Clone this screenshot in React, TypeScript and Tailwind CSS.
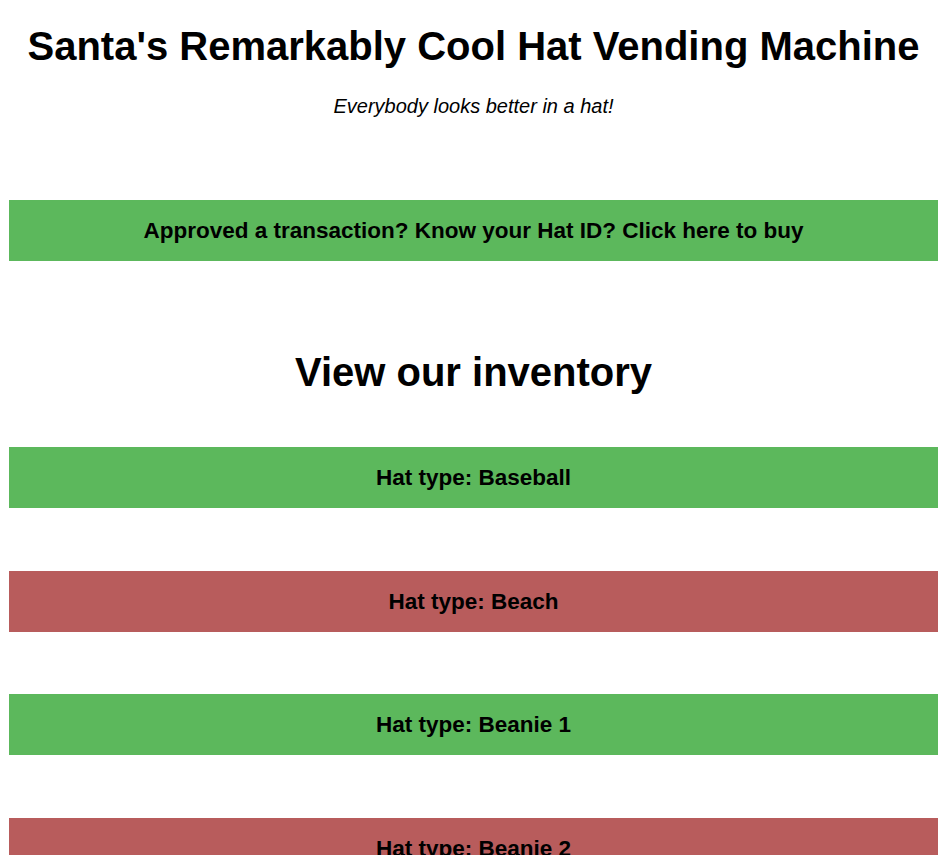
import React from "react";

const hats = [
  { name: "Baseball", ok: true, mt: "mt-[52px]" },
  { name: "Beach", ok: false, mt: "mt-[63px]" },
  { name: "Beanie 1", ok: true, mt: "mt-[62px]" },
  { name: "Beanie 2", ok: false, mt: "mt-[63px]" },
];

export default function App() {
  return (
    <div className="bg-white min-h-screen text-black font-['Liberation_Sans',Arial,sans-serif] overflow-hidden h-[855px]">
      <div className="ml-[9px] w-[929px]">
        <h1 className="text-center text-[40px] leading-[44px] font-bold pt-[24px]">
          Santa's Remarkably Cool Hat Vending Machine
        </h1>
        <p className="text-center italic text-[20px] leading-[24px] mt-[26px]">
          Everybody looks better in a hat!
        </p>
        <div className="mt-[82px] h-[61px] bg-[#5cb85c] flex items-center justify-center text-[22.5px] font-bold">
          Approved a transaction? Know your Hat ID? Click here to buy
        </div>
        <h2 className="text-center text-[40px] leading-[46px] font-bold mt-[88px]">
          View our inventory
        </h2>
        <div className="flex flex-col">
          {hats.map((h) => (
            <div
              key={h.name}
              className={`${h.mt} h-[61px] flex items-center justify-center text-[22.5px] font-bold ${
                h.ok ? "bg-[#5cb85c]" : "bg-[#b85c5c]"
              }`}
            >
              Hat type: {h.name}
            </div>
          ))}
        </div>
      </div>
    </div>
  );
}
